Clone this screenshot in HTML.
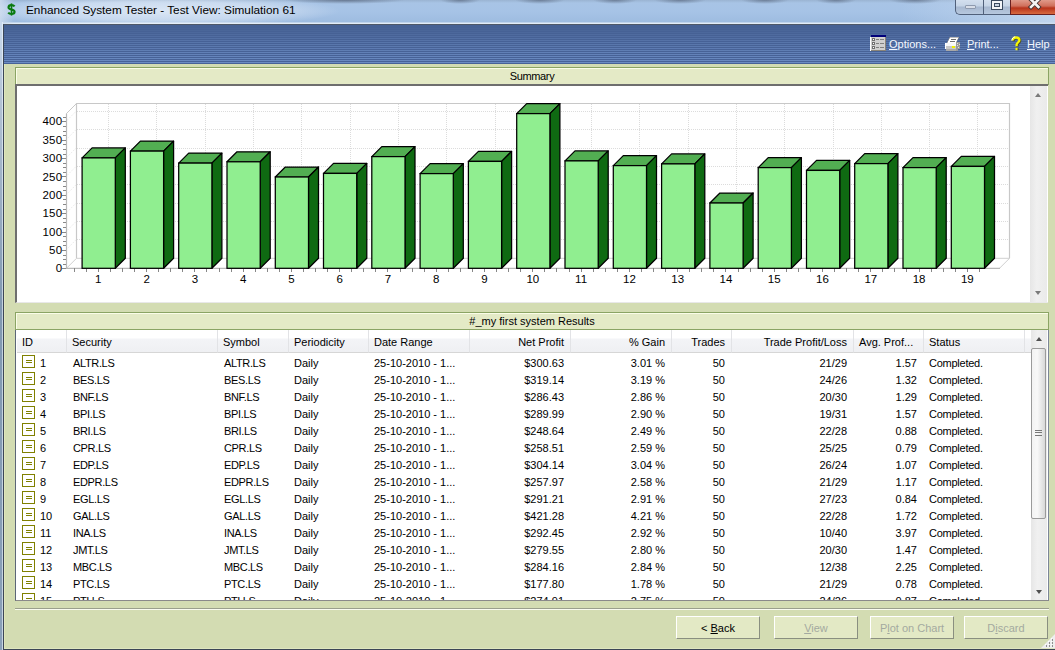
<!DOCTYPE html>
<html><head><meta charset="utf-8">
<style>
*{margin:0;padding:0;box-sizing:border-box}
html,body{width:1055px;height:650px;overflow:hidden;background:#d3dcb2;font-family:"Liberation Sans", sans-serif;font-size:11px;color:#000}
.a{position:absolute}
#title{left:0;top:0;width:1055px;height:24px;background:radial-gradient(ellipse 60px 4px at 345px 0px,rgba(60,70,90,.55),rgba(60,70,90,0)),radial-gradient(ellipse 20px 4px at 460px 0px,rgba(60,70,90,.5),rgba(60,70,90,0)),radial-gradient(ellipse 25px 4px at 540px 0px,rgba(60,70,90,.5),rgba(60,70,90,0)),radial-gradient(ellipse 22px 4px at 615px 0px,rgba(60,70,90,.5),rgba(60,70,90,0)),radial-gradient(ellipse 26px 4px at 680px 0px,rgba(60,70,90,.5),rgba(60,70,90,0)),radial-gradient(ellipse 24px 4px at 765px 0px,rgba(60,70,90,.5),rgba(60,70,90,0)),radial-gradient(ellipse 20px 4px at 836px 0px,rgba(60,70,90,.5),rgba(60,70,90,0)),radial-gradient(ellipse 26px 4px at 915px 0px,rgba(60,70,90,.5),rgba(60,70,90,0)),linear-gradient(90deg,rgba(200,218,240,0) 900px,rgba(200,218,240,.8) 1055px),radial-gradient(ellipse 180px 16px at 160px 11px,rgba(236,242,250,.75),rgba(236,242,250,.5) 60%,rgba(236,242,250,0)),linear-gradient(90deg,rgba(200,216,236,1) 0px,rgba(200,216,236,0) 14px),linear-gradient(180deg,#9ab4d2 0px,#a8c4e6 3px,#a6c3e6 12px,#9ebce0 22px,#e2ecf7 23px,#e2ecf7 24px)}
#tleft{left:0;top:22px;width:3px;height:628px;background:linear-gradient(90deg,rgba(0,0,0,0) 2px,rgba(240,248,255,.6) 2px),linear-gradient(180deg,#c8d8ec 0px,#b2c2d4 80px,#8098b0 280px,#8aa0b8 628px)}
#frame{left:3px;top:24px;width:1052px;height:626px;border-left:1px solid #3c4656;border-top:1px solid #4e5868;border-bottom:1px solid #3c4656;box-shadow:inset 0 -1px 0 #dfe6bf,inset 1px 0 0 #dfe6bb;background:#d3dcb2}
#tb{left:4px;top:25px;width:1051px;height:39px;background:linear-gradient(180deg,rgb(70,97,148) 0px,rgb(70,97,148) 1px,rgb(70,97,148) 1px,rgb(70,97,148) 2px,rgb(70,97,148) 2px,rgb(70,97,148) 3px,rgb(72,99,150) 3px,rgb(72,99,150) 4px,rgb(70,97,148) 4px,rgb(70,97,148) 5px,rgb(74,102,153) 5px,rgb(74,102,153) 6px,rgb(70,97,149) 6px,rgb(70,97,149) 7px,rgb(76,104,156) 7px,rgb(76,104,156) 8px,rgb(70,97,149) 8px,rgb(70,97,149) 9px,rgb(79,107,159) 9px,rgb(79,107,159) 10px,rgb(70,97,149) 10px,rgb(70,97,149) 11px,rgb(81,109,162) 11px,rgb(81,109,162) 12px,rgb(70,97,149) 12px,rgb(70,97,149) 13px,rgb(83,112,165) 13px,rgb(83,112,165) 14px,rgb(70,97,149) 14px,rgb(70,97,149) 15px,rgb(85,114,167) 15px,rgb(85,114,167) 16px,rgb(70,97,150) 16px,rgb(70,97,150) 17px,rgb(87,117,170) 17px,rgb(87,117,170) 18px,rgb(70,97,150) 18px,rgb(70,97,150) 19px,rgb(89,119,172) 19px,rgb(89,119,172) 20px,rgb(71,98,150) 20px,rgb(71,98,150) 21px,rgb(91,121,175) 21px,rgb(91,121,175) 22px,rgb(71,98,150) 22px,rgb(71,98,150) 23px,rgb(93,123,178) 23px,rgb(93,123,178) 24px,rgb(71,98,151) 24px,rgb(71,98,151) 25px,rgb(95,126,180) 25px,rgb(95,126,180) 26px,rgb(71,98,151) 26px,rgb(71,98,151) 27px,rgb(97,128,183) 27px,rgb(97,128,183) 28px,rgb(71,98,151) 28px,rgb(71,98,151) 29px,rgb(99,130,185) 29px,rgb(99,130,185) 30px,rgb(71,98,151) 30px,rgb(71,98,151) 31px,rgb(101,132,188) 31px,rgb(101,132,188) 32px,rgb(71,98,151) 32px,rgb(71,98,151) 33px,rgb(103,135,190) 33px,rgb(103,135,190) 34px,rgb(71,98,152) 34px,rgb(71,98,152) 35px,rgb(105,137,192) 35px,rgb(105,137,192) 36px,rgb(71,98,152) 36px,rgb(71,98,152) 37px,rgb(107,139,195) 37px,rgb(107,139,195) 38px,rgb(71,98,152) 38px,rgb(71,98,152) 39px)}
.hdr{position:absolute;left:15px;width:1034px;height:18px;background:#e4eac6;border:1px solid #8ba464;border-bottom:1px solid #8ba464;box-shadow:inset 1px 1px 0 #fbfde8}
.hdr span{position:absolute;top:2px;left:0;width:100%;text-align:center;color:#000}
#cpanel{left:15px;top:84px;width:1033px;height:219px;background:#fff;border-top:2px solid #6e6e6e;border-left:2px solid #6e6e6e;border-bottom:1px solid #e8e8e8}
.sb{position:absolute;width:17px;background:linear-gradient(90deg,#e6e6e6,#f0f0f0 40%,#eaeaea)}
.arr{position:absolute;width:0;height:0;border-left:3.5px solid transparent;border-right:3.5px solid transparent}
#tpanel{left:15px;top:330px;width:1034px;height:271px;background:#fff;border-left:1px solid #5c6677;border-right:1px solid #7c8698;border-bottom:1px solid #8a8a8a;overflow:hidden}
.th{position:absolute;top:330px;height:23px;background:linear-gradient(180deg,#ffffff 0px,#ffffff 8px,#f3f4f7 9px,#eff0f3 21px);border-right:1px solid #e2e3e6;border-bottom:1px solid #d6d6d6}
.th span{position:absolute;top:6px;white-space:nowrap}
.td{position:absolute;height:17px;line-height:17px;white-space:nowrap}
.td.r{text-align:right}
.ic{position:absolute;left:22px;width:13px;height:13px;border:1.3px solid #808000;background:#fff}
.ic i{position:absolute;left:2.7px;top:3.7px;width:6px;height:3px;border-top:1px solid #808000;border-bottom:1px solid #808000}
.btn{position:absolute;top:616px;width:84px;height:23px;background:#e3e9c5;border:1px solid;border-color:#ffffff #8a8f80 #8a8f80 #ffffff;text-align:center;line-height:22px;color:#a3a9a0}
.tbi{position:absolute;top:38px;color:#f4f7ff;white-space:nowrap}
</style></head><body>
<div class="a" id="title"></div>
<svg class="a" style="left:0;top:0" width="20" height="20" viewBox="0 0 20 20"><path d="M11.5,3.4 V15.6" stroke="#0a7a10" stroke-width="1.6"/><path d="M14.6,6.4 C13.9,5.5 12.9,5.1 11.5,5.1 C9.6,5.1 8.5,6 8.5,7.4 C8.5,10.1 14.6,8.9 14.6,11.8 C14.6,13.2 13.4,14 11.5,14 C10,14 8.9,13.5 8.2,12.6" fill="none" stroke="#0a7a10" stroke-width="2.1"/></svg>
<div class="a" style="left:26px;top:3px;font-size:11.8px;color:#000;white-space:nowrap">Enhanced System Tester - Test View: Simulation 61</div>
<!-- window buttons -->
<div class="a" style="left:955px;top:0;width:28px;height:15px;border:1px solid #50607a;border-top:none;border-right:none;border-radius:0 0 0 5px;background:linear-gradient(180deg,#d3dfee 0,#c5d4e6 6px,#a7b8d0 7px,#b7c8de 14px)"></div>
<div class="a" style="left:965px;top:5px;width:11px;height:4px;background:#d8dee8;border:1px solid #8e9aae;border-radius:1px"></div>
<div class="a" style="left:983px;top:0;width:27px;height:15px;border-left:1px solid #50607a;border-bottom:1px solid #50607a;background:linear-gradient(180deg,#d3dfee 0,#c5d4e6 6px,#a7b8d0 7px,#b7c8de 14px)"></div>
<div class="a" style="left:991px;top:0px;width:12px;height:10px;border:1px solid #3a4a60;background:#f2f4f8"><div class="a" style="left:2px;top:2px;width:6px;height:4px;border:1px solid #3a4a60;background:#c8d4e4"></div></div>
<div class="a" style="left:1010px;top:0;width:45px;height:15px;border-left:1px solid #6a2020;border-bottom:1px solid #6a2020;background:linear-gradient(180deg,#e09a8a 0,#d0705c 6px,#b8341c 8px,#d86a40 14px)"></div>
<svg class="a" style="left:1027px;top:0px" width="16" height="12" viewBox="0 0 16 12"><path d="M4,-0.5 L11.5,7 M11.5,-0.5 L4,7" stroke="#40302e" stroke-width="4.4" stroke-linecap="square"/><path d="M4,-0.5 L11.5,7 M11.5,-0.5 L4,7" stroke="#f4f4f4" stroke-width="2.6" stroke-linecap="square"/></svg>
<div class="a" id="tleft"></div>
<div class="a" id="frame"></div>
<div class="a" id="tb"></div>
<!-- toolbar items -->
<svg class="a" style="left:870px;top:35px" width="17" height="16" viewBox="0 0 17 16" shape-rendering="crispEdges">
<rect x="1" y="0" width="15" height="2" fill="#00007a"/>
<rect x="0" y="2" width="1" height="14" fill="#ffffff"/>
<rect x="1" y="2" width="15" height="14" fill="#d0d0d0"/>
<rect x="15" y="2" width="1" height="14" fill="#8a8478"/>
<rect x="1" y="15" width="15" height="1" fill="#8a8478"/>
<rect x="2" y="3" width="3" height="3" fill="#707070"/><rect x="3" y="4" width="1" height="1" fill="#fff"/>
<rect x="2" y="7" width="3" height="3" fill="#707070"/><rect x="3" y="8" width="1" height="1" fill="#fff"/>
<rect x="2" y="11" width="3" height="3" fill="#707070"/><rect x="3" y="12" width="1" height="1" fill="#fff"/>
<rect x="6" y="4" width="3" height="1" fill="#808080"/><rect x="10" y="4" width="4" height="1" fill="#808080"/>
<rect x="6" y="8" width="3" height="1" fill="#808080"/><rect x="10" y="8" width="4" height="1" fill="#808080"/>
<rect x="6" y="12" width="3" height="1" fill="#808080"/><rect x="10" y="12" width="4" height="1" fill="#808080"/>
</svg>
<div class="tbi" style="left:889px"><u>O</u>ptions...</div>
<svg class="a" style="left:944px;top:36px" width="18" height="16" viewBox="0 0 18 16" shape-rendering="crispEdges">
<path d="M6,1 H15 L12,7 H3 Z" fill="#ffffff" stroke="#8a8a8a" stroke-width="0.6"/>
<rect x="7" y="3" width="5" height="1" fill="#707070"/><rect x="6" y="5" width="5" height="1" fill="#707070"/>
<rect x="1" y="7" width="14" height="3" fill="#f8f8f8"/>
<rect x="1" y="10" width="14" height="3" fill="#c8c8c8"/>
<rect x="1" y="7" width="1" height="6" fill="#ffffff"/>
<rect x="8" y="10" width="3" height="2" fill="#f0f000"/>
<rect x="2" y="13" width="12" height="2" fill="#a8a8a8"/>
<path d="M12,6 h4 v7 h-2 v2 h-2 Z" fill="#9a9a9a"/>
<rect x="13" y="7" width="1" height="1" fill="#e0e0e0"/><rect x="15" y="8" width="1" height="1" fill="#e0e0e0"/><rect x="13" y="9" width="1" height="1" fill="#e0e0e0"/><rect x="14" y="11" width="1" height="1" fill="#e0e0e0"/>
</svg>
<div class="tbi" style="left:967px"><u>P</u>rint...</div>
<svg class="a" style="left:1010px;top:36px" width="12" height="15" viewBox="0 0 12 15">
<path d="M2.6,4.6 C2.6,2.2 4,1.5 6,1.5 C8.2,1.5 9.4,2.6 9.4,4.2 C9.4,6.2 6.6,6.8 6.6,8.8 V10.2" fill="none" stroke="#4a4a20" stroke-width="2.3" transform="translate(0.8,0.6)"/>
<path d="M2.6,4.6 C2.6,2.2 4,1.5 6,1.5 C8.2,1.5 9.4,2.6 9.4,4.2 C9.4,6.2 6.6,6.8 6.6,8.8 V10.2" fill="none" stroke="#f8f800" stroke-width="2.3"/>
<path d="M1.9,4.6 C1.9,2.4 3.2,1 5.2,0.8" fill="none" stroke="#ffffff" stroke-width="1"/>
<rect x="5.5" y="11.8" width="2.2" height="2.4" fill="#f8f800"/>
<rect x="7.7" y="12.2" width="0.9" height="2.2" fill="#4a4a20"/>
</svg>
<div class="tbi" style="left:1027px"><u>H</u>elp</div>

<!-- summary -->
<div class="hdr" style="top:67px"><span style="letter-spacing:-0.35px">Summary</span></div>
<div class="a" id="cpanel"></div>
<div class="sb" style="left:1030px;top:86px;height:216px"></div>
<div class="arr" style="left:1035px;top:93px;border-bottom:4px solid #7a7a7a"></div>
<div class="arr" style="left:1035px;top:291px;border-top:4px solid #7a7a7a"></div>
<svg width="1013" height="216" viewBox="17 86 1013 216" style="position:absolute;left:17px;top:86px">
<line x1="77" y1="239.5" x2="1009" y2="239.5" stroke="#dcdcdc" stroke-width="1" stroke-dasharray="1,1" shape-rendering="crispEdges"/>
<line x1="66" y1="249.9" x2="76" y2="239.9" stroke="#e4e4e4" stroke-width="1" stroke-dasharray="1,1.5"/>
<line x1="77" y1="221.5" x2="1009" y2="221.5" stroke="#dcdcdc" stroke-width="1" stroke-dasharray="1,1" shape-rendering="crispEdges"/>
<line x1="66" y1="231.6" x2="76" y2="221.6" stroke="#e4e4e4" stroke-width="1" stroke-dasharray="1,1.5"/>
<line x1="77" y1="203.5" x2="1009" y2="203.5" stroke="#dcdcdc" stroke-width="1" stroke-dasharray="1,1" shape-rendering="crispEdges"/>
<line x1="66" y1="213.2" x2="76" y2="203.2" stroke="#e4e4e4" stroke-width="1" stroke-dasharray="1,1.5"/>
<line x1="77" y1="184.5" x2="1009" y2="184.5" stroke="#dcdcdc" stroke-width="1" stroke-dasharray="1,1" shape-rendering="crispEdges"/>
<line x1="66" y1="194.9" x2="76" y2="184.9" stroke="#e4e4e4" stroke-width="1" stroke-dasharray="1,1.5"/>
<line x1="77" y1="166.5" x2="1009" y2="166.5" stroke="#dcdcdc" stroke-width="1" stroke-dasharray="1,1" shape-rendering="crispEdges"/>
<line x1="66" y1="176.5" x2="76" y2="166.5" stroke="#e4e4e4" stroke-width="1" stroke-dasharray="1,1.5"/>
<line x1="77" y1="148.5" x2="1009" y2="148.5" stroke="#dcdcdc" stroke-width="1" stroke-dasharray="1,1" shape-rendering="crispEdges"/>
<line x1="66" y1="158.1" x2="76" y2="148.1" stroke="#e4e4e4" stroke-width="1" stroke-dasharray="1,1.5"/>
<line x1="77" y1="129.5" x2="1009" y2="129.5" stroke="#dcdcdc" stroke-width="1" stroke-dasharray="1,1" shape-rendering="crispEdges"/>
<line x1="66" y1="139.8" x2="76" y2="129.8" stroke="#e4e4e4" stroke-width="1" stroke-dasharray="1,1.5"/>
<line x1="77" y1="111.5" x2="1009" y2="111.5" stroke="#dcdcdc" stroke-width="1" stroke-dasharray="1,1" shape-rendering="crispEdges"/>
<line x1="66" y1="121.4" x2="76" y2="111.4" stroke="#e4e4e4" stroke-width="1" stroke-dasharray="1,1.5"/>
<line x1="108.5" y1="104" x2="108.5" y2="258.3" stroke="#dcdcdc" stroke-width="1" stroke-dasharray="1,1" shape-rendering="crispEdges"/>
<line x1="156.5" y1="104" x2="156.5" y2="258.3" stroke="#dcdcdc" stroke-width="1" stroke-dasharray="1,1" shape-rendering="crispEdges"/>
<line x1="205.5" y1="104" x2="205.5" y2="258.3" stroke="#dcdcdc" stroke-width="1" stroke-dasharray="1,1" shape-rendering="crispEdges"/>
<line x1="253.5" y1="104" x2="253.5" y2="258.3" stroke="#dcdcdc" stroke-width="1" stroke-dasharray="1,1" shape-rendering="crispEdges"/>
<line x1="301.5" y1="104" x2="301.5" y2="258.3" stroke="#dcdcdc" stroke-width="1" stroke-dasharray="1,1" shape-rendering="crispEdges"/>
<line x1="350.5" y1="104" x2="350.5" y2="258.3" stroke="#dcdcdc" stroke-width="1" stroke-dasharray="1,1" shape-rendering="crispEdges"/>
<line x1="398.5" y1="104" x2="398.5" y2="258.3" stroke="#dcdcdc" stroke-width="1" stroke-dasharray="1,1" shape-rendering="crispEdges"/>
<line x1="446.5" y1="104" x2="446.5" y2="258.3" stroke="#dcdcdc" stroke-width="1" stroke-dasharray="1,1" shape-rendering="crispEdges"/>
<line x1="495.5" y1="104" x2="495.5" y2="258.3" stroke="#dcdcdc" stroke-width="1" stroke-dasharray="1,1" shape-rendering="crispEdges"/>
<line x1="543.5" y1="104" x2="543.5" y2="258.3" stroke="#dcdcdc" stroke-width="1" stroke-dasharray="1,1" shape-rendering="crispEdges"/>
<line x1="591.5" y1="104" x2="591.5" y2="258.3" stroke="#dcdcdc" stroke-width="1" stroke-dasharray="1,1" shape-rendering="crispEdges"/>
<line x1="639.5" y1="104" x2="639.5" y2="258.3" stroke="#dcdcdc" stroke-width="1" stroke-dasharray="1,1" shape-rendering="crispEdges"/>
<line x1="688.5" y1="104" x2="688.5" y2="258.3" stroke="#dcdcdc" stroke-width="1" stroke-dasharray="1,1" shape-rendering="crispEdges"/>
<line x1="736.5" y1="104" x2="736.5" y2="258.3" stroke="#dcdcdc" stroke-width="1" stroke-dasharray="1,1" shape-rendering="crispEdges"/>
<line x1="784.5" y1="104" x2="784.5" y2="258.3" stroke="#dcdcdc" stroke-width="1" stroke-dasharray="1,1" shape-rendering="crispEdges"/>
<line x1="833.5" y1="104" x2="833.5" y2="258.3" stroke="#dcdcdc" stroke-width="1" stroke-dasharray="1,1" shape-rendering="crispEdges"/>
<line x1="881.5" y1="104" x2="881.5" y2="258.3" stroke="#dcdcdc" stroke-width="1" stroke-dasharray="1,1" shape-rendering="crispEdges"/>
<line x1="929.5" y1="104" x2="929.5" y2="258.3" stroke="#dcdcdc" stroke-width="1" stroke-dasharray="1,1" shape-rendering="crispEdges"/>
<line x1="977.5" y1="104" x2="977.5" y2="258.3" stroke="#dcdcdc" stroke-width="1" stroke-dasharray="1,1" shape-rendering="crispEdges"/>
<path d="M76.5,258.3 V103.5 H1009.5 V258.3" fill="none" stroke="#c8c8c8" stroke-width="1.2"/>
<path d="M66.5,113.5 L76.5,103.5" fill="none" stroke="#c8c8c8" stroke-width="1"/>
<path d="M66.5,268.3 L76.5,258.3 H1009.5 L999.5,268.3" fill="none" stroke="#d0d0d0" stroke-width="1"/>
<path d="M66.5,113.5 V268.3 H1000" fill="none" stroke="#b8b8b8" stroke-width="1.2"/>
<line x1="62" y1="268.5" x2="66" y2="268.5" stroke="#888" stroke-width="1"/>
<line x1="63" y1="264.5" x2="66" y2="264.5" stroke="#888" stroke-width="1"/>
<line x1="63" y1="259.5" x2="66" y2="259.5" stroke="#888" stroke-width="1"/>
<line x1="63" y1="255.5" x2="66" y2="255.5" stroke="#888" stroke-width="1"/>
<line x1="62" y1="250.5" x2="66" y2="250.5" stroke="#888" stroke-width="1"/>
<line x1="63" y1="245.5" x2="66" y2="245.5" stroke="#888" stroke-width="1"/>
<line x1="63" y1="241.5" x2="66" y2="241.5" stroke="#888" stroke-width="1"/>
<line x1="63" y1="236.5" x2="66" y2="236.5" stroke="#888" stroke-width="1"/>
<line x1="62" y1="232.5" x2="66" y2="232.5" stroke="#888" stroke-width="1"/>
<line x1="63" y1="227.5" x2="66" y2="227.5" stroke="#888" stroke-width="1"/>
<line x1="63" y1="222.5" x2="66" y2="222.5" stroke="#888" stroke-width="1"/>
<line x1="63" y1="218.5" x2="66" y2="218.5" stroke="#888" stroke-width="1"/>
<line x1="62" y1="213.5" x2="66" y2="213.5" stroke="#888" stroke-width="1"/>
<line x1="63" y1="209.5" x2="66" y2="209.5" stroke="#888" stroke-width="1"/>
<line x1="63" y1="204.5" x2="66" y2="204.5" stroke="#888" stroke-width="1"/>
<line x1="63" y1="199.5" x2="66" y2="199.5" stroke="#888" stroke-width="1"/>
<line x1="62" y1="195.5" x2="66" y2="195.5" stroke="#888" stroke-width="1"/>
<line x1="63" y1="190.5" x2="66" y2="190.5" stroke="#888" stroke-width="1"/>
<line x1="63" y1="186.5" x2="66" y2="186.5" stroke="#888" stroke-width="1"/>
<line x1="63" y1="181.5" x2="66" y2="181.5" stroke="#888" stroke-width="1"/>
<line x1="62" y1="176.5" x2="66" y2="176.5" stroke="#888" stroke-width="1"/>
<line x1="63" y1="172.5" x2="66" y2="172.5" stroke="#888" stroke-width="1"/>
<line x1="63" y1="167.5" x2="66" y2="167.5" stroke="#888" stroke-width="1"/>
<line x1="63" y1="163.5" x2="66" y2="163.5" stroke="#888" stroke-width="1"/>
<line x1="62" y1="158.5" x2="66" y2="158.5" stroke="#888" stroke-width="1"/>
<line x1="63" y1="154.5" x2="66" y2="154.5" stroke="#888" stroke-width="1"/>
<line x1="63" y1="149.5" x2="66" y2="149.5" stroke="#888" stroke-width="1"/>
<line x1="63" y1="144.5" x2="66" y2="144.5" stroke="#888" stroke-width="1"/>
<line x1="62" y1="140.5" x2="66" y2="140.5" stroke="#888" stroke-width="1"/>
<line x1="63" y1="135.5" x2="66" y2="135.5" stroke="#888" stroke-width="1"/>
<line x1="63" y1="131.5" x2="66" y2="131.5" stroke="#888" stroke-width="1"/>
<line x1="63" y1="126.5" x2="66" y2="126.5" stroke="#888" stroke-width="1"/>
<line x1="62" y1="121.5" x2="66" y2="121.5" stroke="#888" stroke-width="1"/>
<line x1="63" y1="117.5" x2="66" y2="117.5" stroke="#888" stroke-width="1"/>
<text x="62.5" y="272.3" text-anchor="end" font-family='"Liberation Sans", sans-serif' font-size="11.5" letter-spacing="0.3" fill="#000">0</text>
<text x="62.5" y="253.9" text-anchor="end" font-family='"Liberation Sans", sans-serif' font-size="11.5" letter-spacing="0.3" fill="#000">50</text>
<text x="62.5" y="235.6" text-anchor="end" font-family='"Liberation Sans", sans-serif' font-size="11.5" letter-spacing="0.3" fill="#000">100</text>
<text x="62.5" y="217.2" text-anchor="end" font-family='"Liberation Sans", sans-serif' font-size="11.5" letter-spacing="0.3" fill="#000">150</text>
<text x="62.5" y="198.9" text-anchor="end" font-family='"Liberation Sans", sans-serif' font-size="11.5" letter-spacing="0.3" fill="#000">200</text>
<text x="62.5" y="180.5" text-anchor="end" font-family='"Liberation Sans", sans-serif' font-size="11.5" letter-spacing="0.3" fill="#000">250</text>
<text x="62.5" y="162.1" text-anchor="end" font-family='"Liberation Sans", sans-serif' font-size="11.5" letter-spacing="0.3" fill="#000">300</text>
<text x="62.5" y="143.8" text-anchor="end" font-family='"Liberation Sans", sans-serif' font-size="11.5" letter-spacing="0.3" fill="#000">350</text>
<text x="62.5" y="125.4" text-anchor="end" font-family='"Liberation Sans", sans-serif' font-size="11.5" letter-spacing="0.3" fill="#000">400</text>
<line x1="74.5" y1="268" x2="74.5" y2="272" stroke="#888" stroke-width="1" shape-rendering="crispEdges"/>
<line x1="86.5" y1="268" x2="86.5" y2="272" stroke="#888" stroke-width="1" shape-rendering="crispEdges"/>
<line x1="98.5" y1="268" x2="98.5" y2="272" stroke="#888" stroke-width="1" shape-rendering="crispEdges"/>
<line x1="110.5" y1="268" x2="110.5" y2="272" stroke="#888" stroke-width="1" shape-rendering="crispEdges"/>
<text x="98.3" y="283" text-anchor="middle" font-family='"Liberation Sans", sans-serif' font-size="11.5" fill="#000">1</text>
<line x1="122.5" y1="268" x2="122.5" y2="272" stroke="#888" stroke-width="1" shape-rendering="crispEdges"/>
<line x1="134.5" y1="268" x2="134.5" y2="272" stroke="#888" stroke-width="1" shape-rendering="crispEdges"/>
<line x1="146.5" y1="268" x2="146.5" y2="272" stroke="#888" stroke-width="1" shape-rendering="crispEdges"/>
<line x1="158.5" y1="268" x2="158.5" y2="272" stroke="#888" stroke-width="1" shape-rendering="crispEdges"/>
<text x="146.6" y="283" text-anchor="middle" font-family='"Liberation Sans", sans-serif' font-size="11.5" fill="#000">2</text>
<line x1="170.5" y1="268" x2="170.5" y2="272" stroke="#888" stroke-width="1" shape-rendering="crispEdges"/>
<line x1="182.5" y1="268" x2="182.5" y2="272" stroke="#888" stroke-width="1" shape-rendering="crispEdges"/>
<line x1="194.5" y1="268" x2="194.5" y2="272" stroke="#888" stroke-width="1" shape-rendering="crispEdges"/>
<line x1="206.5" y1="268" x2="206.5" y2="272" stroke="#888" stroke-width="1" shape-rendering="crispEdges"/>
<text x="194.9" y="283" text-anchor="middle" font-family='"Liberation Sans", sans-serif' font-size="11.5" fill="#000">3</text>
<line x1="219.5" y1="268" x2="219.5" y2="272" stroke="#888" stroke-width="1" shape-rendering="crispEdges"/>
<line x1="231.5" y1="268" x2="231.5" y2="272" stroke="#888" stroke-width="1" shape-rendering="crispEdges"/>
<line x1="243.5" y1="268" x2="243.5" y2="272" stroke="#888" stroke-width="1" shape-rendering="crispEdges"/>
<line x1="255.5" y1="268" x2="255.5" y2="272" stroke="#888" stroke-width="1" shape-rendering="crispEdges"/>
<text x="243.1" y="283" text-anchor="middle" font-family='"Liberation Sans", sans-serif' font-size="11.5" fill="#000">4</text>
<line x1="267.5" y1="268" x2="267.5" y2="272" stroke="#888" stroke-width="1" shape-rendering="crispEdges"/>
<line x1="279.5" y1="268" x2="279.5" y2="272" stroke="#888" stroke-width="1" shape-rendering="crispEdges"/>
<line x1="291.5" y1="268" x2="291.5" y2="272" stroke="#888" stroke-width="1" shape-rendering="crispEdges"/>
<line x1="303.5" y1="268" x2="303.5" y2="272" stroke="#888" stroke-width="1" shape-rendering="crispEdges"/>
<text x="291.4" y="283" text-anchor="middle" font-family='"Liberation Sans", sans-serif' font-size="11.5" fill="#000">5</text>
<line x1="315.5" y1="268" x2="315.5" y2="272" stroke="#888" stroke-width="1" shape-rendering="crispEdges"/>
<line x1="327.5" y1="268" x2="327.5" y2="272" stroke="#888" stroke-width="1" shape-rendering="crispEdges"/>
<line x1="339.5" y1="268" x2="339.5" y2="272" stroke="#888" stroke-width="1" shape-rendering="crispEdges"/>
<line x1="351.5" y1="268" x2="351.5" y2="272" stroke="#888" stroke-width="1" shape-rendering="crispEdges"/>
<text x="339.7" y="283" text-anchor="middle" font-family='"Liberation Sans", sans-serif' font-size="11.5" fill="#000">6</text>
<line x1="363.5" y1="268" x2="363.5" y2="272" stroke="#888" stroke-width="1" shape-rendering="crispEdges"/>
<line x1="375.5" y1="268" x2="375.5" y2="272" stroke="#888" stroke-width="1" shape-rendering="crispEdges"/>
<line x1="387.5" y1="268" x2="387.5" y2="272" stroke="#888" stroke-width="1" shape-rendering="crispEdges"/>
<line x1="400.5" y1="268" x2="400.5" y2="272" stroke="#888" stroke-width="1" shape-rendering="crispEdges"/>
<text x="388.0" y="283" text-anchor="middle" font-family='"Liberation Sans", sans-serif' font-size="11.5" fill="#000">7</text>
<line x1="412.5" y1="268" x2="412.5" y2="272" stroke="#888" stroke-width="1" shape-rendering="crispEdges"/>
<line x1="424.5" y1="268" x2="424.5" y2="272" stroke="#888" stroke-width="1" shape-rendering="crispEdges"/>
<line x1="436.5" y1="268" x2="436.5" y2="272" stroke="#888" stroke-width="1" shape-rendering="crispEdges"/>
<line x1="448.5" y1="268" x2="448.5" y2="272" stroke="#888" stroke-width="1" shape-rendering="crispEdges"/>
<text x="436.3" y="283" text-anchor="middle" font-family='"Liberation Sans", sans-serif' font-size="11.5" fill="#000">8</text>
<line x1="460.5" y1="268" x2="460.5" y2="272" stroke="#888" stroke-width="1" shape-rendering="crispEdges"/>
<line x1="472.5" y1="268" x2="472.5" y2="272" stroke="#888" stroke-width="1" shape-rendering="crispEdges"/>
<line x1="484.5" y1="268" x2="484.5" y2="272" stroke="#888" stroke-width="1" shape-rendering="crispEdges"/>
<line x1="496.5" y1="268" x2="496.5" y2="272" stroke="#888" stroke-width="1" shape-rendering="crispEdges"/>
<text x="484.5" y="283" text-anchor="middle" font-family='"Liberation Sans", sans-serif' font-size="11.5" fill="#000">9</text>
<line x1="508.5" y1="268" x2="508.5" y2="272" stroke="#888" stroke-width="1" shape-rendering="crispEdges"/>
<line x1="520.5" y1="268" x2="520.5" y2="272" stroke="#888" stroke-width="1" shape-rendering="crispEdges"/>
<line x1="532.5" y1="268" x2="532.5" y2="272" stroke="#888" stroke-width="1" shape-rendering="crispEdges"/>
<line x1="544.5" y1="268" x2="544.5" y2="272" stroke="#888" stroke-width="1" shape-rendering="crispEdges"/>
<text x="532.8" y="283" text-anchor="middle" font-family='"Liberation Sans", sans-serif' font-size="11.5" fill="#000">10</text>
<line x1="556.5" y1="268" x2="556.5" y2="272" stroke="#888" stroke-width="1" shape-rendering="crispEdges"/>
<line x1="569.5" y1="268" x2="569.5" y2="272" stroke="#888" stroke-width="1" shape-rendering="crispEdges"/>
<line x1="581.5" y1="268" x2="581.5" y2="272" stroke="#888" stroke-width="1" shape-rendering="crispEdges"/>
<line x1="593.5" y1="268" x2="593.5" y2="272" stroke="#888" stroke-width="1" shape-rendering="crispEdges"/>
<text x="581.1" y="283" text-anchor="middle" font-family='"Liberation Sans", sans-serif' font-size="11.5" fill="#000">11</text>
<line x1="605.5" y1="268" x2="605.5" y2="272" stroke="#888" stroke-width="1" shape-rendering="crispEdges"/>
<line x1="617.5" y1="268" x2="617.5" y2="272" stroke="#888" stroke-width="1" shape-rendering="crispEdges"/>
<line x1="629.5" y1="268" x2="629.5" y2="272" stroke="#888" stroke-width="1" shape-rendering="crispEdges"/>
<line x1="641.5" y1="268" x2="641.5" y2="272" stroke="#888" stroke-width="1" shape-rendering="crispEdges"/>
<text x="629.4" y="283" text-anchor="middle" font-family='"Liberation Sans", sans-serif' font-size="11.5" fill="#000">12</text>
<line x1="653.5" y1="268" x2="653.5" y2="272" stroke="#888" stroke-width="1" shape-rendering="crispEdges"/>
<line x1="665.5" y1="268" x2="665.5" y2="272" stroke="#888" stroke-width="1" shape-rendering="crispEdges"/>
<line x1="677.5" y1="268" x2="677.5" y2="272" stroke="#888" stroke-width="1" shape-rendering="crispEdges"/>
<line x1="689.5" y1="268" x2="689.5" y2="272" stroke="#888" stroke-width="1" shape-rendering="crispEdges"/>
<text x="677.7" y="283" text-anchor="middle" font-family='"Liberation Sans", sans-serif' font-size="11.5" fill="#000">13</text>
<line x1="701.5" y1="268" x2="701.5" y2="272" stroke="#888" stroke-width="1" shape-rendering="crispEdges"/>
<line x1="713.5" y1="268" x2="713.5" y2="272" stroke="#888" stroke-width="1" shape-rendering="crispEdges"/>
<line x1="725.5" y1="268" x2="725.5" y2="272" stroke="#888" stroke-width="1" shape-rendering="crispEdges"/>
<line x1="738.5" y1="268" x2="738.5" y2="272" stroke="#888" stroke-width="1" shape-rendering="crispEdges"/>
<text x="725.9" y="283" text-anchor="middle" font-family='"Liberation Sans", sans-serif' font-size="11.5" fill="#000">14</text>
<line x1="750.5" y1="268" x2="750.5" y2="272" stroke="#888" stroke-width="1" shape-rendering="crispEdges"/>
<line x1="762.5" y1="268" x2="762.5" y2="272" stroke="#888" stroke-width="1" shape-rendering="crispEdges"/>
<line x1="774.5" y1="268" x2="774.5" y2="272" stroke="#888" stroke-width="1" shape-rendering="crispEdges"/>
<line x1="786.5" y1="268" x2="786.5" y2="272" stroke="#888" stroke-width="1" shape-rendering="crispEdges"/>
<text x="774.2" y="283" text-anchor="middle" font-family='"Liberation Sans", sans-serif' font-size="11.5" fill="#000">15</text>
<line x1="798.5" y1="268" x2="798.5" y2="272" stroke="#888" stroke-width="1" shape-rendering="crispEdges"/>
<line x1="810.5" y1="268" x2="810.5" y2="272" stroke="#888" stroke-width="1" shape-rendering="crispEdges"/>
<line x1="822.5" y1="268" x2="822.5" y2="272" stroke="#888" stroke-width="1" shape-rendering="crispEdges"/>
<line x1="834.5" y1="268" x2="834.5" y2="272" stroke="#888" stroke-width="1" shape-rendering="crispEdges"/>
<text x="822.5" y="283" text-anchor="middle" font-family='"Liberation Sans", sans-serif' font-size="11.5" fill="#000">16</text>
<line x1="846.5" y1="268" x2="846.5" y2="272" stroke="#888" stroke-width="1" shape-rendering="crispEdges"/>
<line x1="858.5" y1="268" x2="858.5" y2="272" stroke="#888" stroke-width="1" shape-rendering="crispEdges"/>
<line x1="870.5" y1="268" x2="870.5" y2="272" stroke="#888" stroke-width="1" shape-rendering="crispEdges"/>
<line x1="882.5" y1="268" x2="882.5" y2="272" stroke="#888" stroke-width="1" shape-rendering="crispEdges"/>
<text x="870.8" y="283" text-anchor="middle" font-family='"Liberation Sans", sans-serif' font-size="11.5" fill="#000">17</text>
<line x1="894.5" y1="268" x2="894.5" y2="272" stroke="#888" stroke-width="1" shape-rendering="crispEdges"/>
<line x1="906.5" y1="268" x2="906.5" y2="272" stroke="#888" stroke-width="1" shape-rendering="crispEdges"/>
<line x1="919.5" y1="268" x2="919.5" y2="272" stroke="#888" stroke-width="1" shape-rendering="crispEdges"/>
<line x1="931.5" y1="268" x2="931.5" y2="272" stroke="#888" stroke-width="1" shape-rendering="crispEdges"/>
<text x="919.1" y="283" text-anchor="middle" font-family='"Liberation Sans", sans-serif' font-size="11.5" fill="#000">18</text>
<line x1="943.5" y1="268" x2="943.5" y2="272" stroke="#888" stroke-width="1" shape-rendering="crispEdges"/>
<line x1="955.5" y1="268" x2="955.5" y2="272" stroke="#888" stroke-width="1" shape-rendering="crispEdges"/>
<line x1="967.5" y1="268" x2="967.5" y2="272" stroke="#888" stroke-width="1" shape-rendering="crispEdges"/>
<line x1="979.5" y1="268" x2="979.5" y2="272" stroke="#888" stroke-width="1" shape-rendering="crispEdges"/>
<text x="967.3" y="283" text-anchor="middle" font-family='"Liberation Sans", sans-serif' font-size="11.5" fill="#000">19</text>
<path d="M82.1,157.9 L92.1,147.9 H125.3 L115.3,157.9 Z" fill="#52ae52" stroke="#000" stroke-width="1.25" stroke-linejoin="round"/>
<path d="M115.3,157.9 L125.3,147.9 V258.3 L115.3,268.3 Z" fill="#0f6a12" stroke="#000" stroke-width="1.25" stroke-linejoin="round"/>
<rect x="82.1" y="157.9" width="33.2" height="110.4" fill="#90ee90" stroke="#000" stroke-width="1.25"/>
<path d="M130.4,151.1 L140.4,141.1 H173.6 L163.6,151.1 Z" fill="#52ae52" stroke="#000" stroke-width="1.25" stroke-linejoin="round"/>
<path d="M163.6,151.1 L173.6,141.1 V258.3 L163.6,268.3 Z" fill="#0f6a12" stroke="#000" stroke-width="1.25" stroke-linejoin="round"/>
<rect x="130.4" y="151.1" width="33.2" height="117.2" fill="#90ee90" stroke="#000" stroke-width="1.25"/>
<path d="M178.7,163.1 L188.7,153.1 H221.9 L211.9,163.1 Z" fill="#52ae52" stroke="#000" stroke-width="1.25" stroke-linejoin="round"/>
<path d="M211.9,163.1 L221.9,153.1 V258.3 L211.9,268.3 Z" fill="#0f6a12" stroke="#000" stroke-width="1.25" stroke-linejoin="round"/>
<rect x="178.7" y="163.1" width="33.2" height="105.2" fill="#90ee90" stroke="#000" stroke-width="1.25"/>
<path d="M227.0,161.8 L237.0,151.8 H270.2 L260.2,161.8 Z" fill="#52ae52" stroke="#000" stroke-width="1.25" stroke-linejoin="round"/>
<path d="M260.2,161.8 L270.2,151.8 V258.3 L260.2,268.3 Z" fill="#0f6a12" stroke="#000" stroke-width="1.25" stroke-linejoin="round"/>
<rect x="227.0" y="161.8" width="33.2" height="106.5" fill="#90ee90" stroke="#000" stroke-width="1.25"/>
<path d="M275.3,177.0 L285.3,167.0 H318.5 L308.5,177.0 Z" fill="#52ae52" stroke="#000" stroke-width="1.25" stroke-linejoin="round"/>
<path d="M308.5,177.0 L318.5,167.0 V258.3 L308.5,268.3 Z" fill="#0f6a12" stroke="#000" stroke-width="1.25" stroke-linejoin="round"/>
<rect x="275.3" y="177.0" width="33.2" height="91.3" fill="#90ee90" stroke="#000" stroke-width="1.25"/>
<path d="M323.5,173.4 L333.5,163.4 H366.8 L356.8,173.4 Z" fill="#52ae52" stroke="#000" stroke-width="1.25" stroke-linejoin="round"/>
<path d="M356.8,173.4 L366.8,163.4 V258.3 L356.8,268.3 Z" fill="#0f6a12" stroke="#000" stroke-width="1.25" stroke-linejoin="round"/>
<rect x="323.5" y="173.4" width="33.2" height="94.9" fill="#90ee90" stroke="#000" stroke-width="1.25"/>
<path d="M371.8,156.6 L381.8,146.6 H415.0 L405.0,156.6 Z" fill="#52ae52" stroke="#000" stroke-width="1.25" stroke-linejoin="round"/>
<path d="M405.0,156.6 L415.0,146.6 V258.3 L405.0,268.3 Z" fill="#0f6a12" stroke="#000" stroke-width="1.25" stroke-linejoin="round"/>
<rect x="371.8" y="156.6" width="33.2" height="111.7" fill="#90ee90" stroke="#000" stroke-width="1.25"/>
<path d="M420.1,173.6 L430.1,163.6 H463.3 L453.3,173.6 Z" fill="#52ae52" stroke="#000" stroke-width="1.25" stroke-linejoin="round"/>
<path d="M453.3,173.6 L463.3,163.6 V258.3 L453.3,268.3 Z" fill="#0f6a12" stroke="#000" stroke-width="1.25" stroke-linejoin="round"/>
<rect x="420.1" y="173.6" width="33.2" height="94.7" fill="#90ee90" stroke="#000" stroke-width="1.25"/>
<path d="M468.4,161.4 L478.4,151.4 H511.6 L501.6,161.4 Z" fill="#52ae52" stroke="#000" stroke-width="1.25" stroke-linejoin="round"/>
<path d="M501.6,161.4 L511.6,151.4 V258.3 L501.6,268.3 Z" fill="#0f6a12" stroke="#000" stroke-width="1.25" stroke-linejoin="round"/>
<rect x="468.4" y="161.4" width="33.2" height="106.9" fill="#90ee90" stroke="#000" stroke-width="1.25"/>
<path d="M516.7,113.6 L526.7,103.6 H559.9 L549.9,113.6 Z" fill="#52ae52" stroke="#000" stroke-width="1.25" stroke-linejoin="round"/>
<path d="M549.9,113.6 L559.9,103.6 V258.3 L549.9,268.3 Z" fill="#0f6a12" stroke="#000" stroke-width="1.25" stroke-linejoin="round"/>
<rect x="516.7" y="113.6" width="33.2" height="154.7" fill="#90ee90" stroke="#000" stroke-width="1.25"/>
<path d="M565.0,160.9 L575.0,150.9 H608.2 L598.2,160.9 Z" fill="#52ae52" stroke="#000" stroke-width="1.25" stroke-linejoin="round"/>
<path d="M598.2,160.9 L608.2,150.9 V258.3 L598.2,268.3 Z" fill="#0f6a12" stroke="#000" stroke-width="1.25" stroke-linejoin="round"/>
<rect x="565.0" y="160.9" width="33.2" height="107.4" fill="#90ee90" stroke="#000" stroke-width="1.25"/>
<path d="M613.3,165.6 L623.3,155.6 H656.5 L646.5,165.6 Z" fill="#52ae52" stroke="#000" stroke-width="1.25" stroke-linejoin="round"/>
<path d="M646.5,165.6 L656.5,155.6 V258.3 L646.5,268.3 Z" fill="#0f6a12" stroke="#000" stroke-width="1.25" stroke-linejoin="round"/>
<rect x="613.3" y="165.6" width="33.2" height="102.7" fill="#90ee90" stroke="#000" stroke-width="1.25"/>
<path d="M661.6,163.9 L671.6,153.9 H704.8 L694.8,163.9 Z" fill="#52ae52" stroke="#000" stroke-width="1.25" stroke-linejoin="round"/>
<path d="M694.8,163.9 L704.8,153.9 V258.3 L694.8,268.3 Z" fill="#0f6a12" stroke="#000" stroke-width="1.25" stroke-linejoin="round"/>
<rect x="661.6" y="163.9" width="33.2" height="104.4" fill="#90ee90" stroke="#000" stroke-width="1.25"/>
<path d="M709.9,203.0 L719.9,193.0 H753.1 L743.1,203.0 Z" fill="#52ae52" stroke="#000" stroke-width="1.25" stroke-linejoin="round"/>
<path d="M743.1,203.0 L753.1,193.0 V258.3 L743.1,268.3 Z" fill="#0f6a12" stroke="#000" stroke-width="1.25" stroke-linejoin="round"/>
<rect x="709.9" y="203.0" width="33.2" height="65.3" fill="#90ee90" stroke="#000" stroke-width="1.25"/>
<path d="M758.2,167.6 L768.2,157.6 H801.4 L791.4,167.6 Z" fill="#52ae52" stroke="#000" stroke-width="1.25" stroke-linejoin="round"/>
<path d="M791.4,167.6 L801.4,157.6 V258.3 L791.4,268.3 Z" fill="#0f6a12" stroke="#000" stroke-width="1.25" stroke-linejoin="round"/>
<rect x="758.2" y="167.6" width="33.2" height="100.7" fill="#90ee90" stroke="#000" stroke-width="1.25"/>
<path d="M806.5,170.4 L816.5,160.4 H849.7 L839.7,170.4 Z" fill="#52ae52" stroke="#000" stroke-width="1.25" stroke-linejoin="round"/>
<path d="M839.7,170.4 L849.7,160.4 V258.3 L839.7,268.3 Z" fill="#0f6a12" stroke="#000" stroke-width="1.25" stroke-linejoin="round"/>
<rect x="806.5" y="170.4" width="33.2" height="97.9" fill="#90ee90" stroke="#000" stroke-width="1.25"/>
<path d="M854.7,163.6 L864.7,153.6 H897.9 L887.9,163.6 Z" fill="#52ae52" stroke="#000" stroke-width="1.25" stroke-linejoin="round"/>
<path d="M887.9,163.6 L897.9,153.6 V258.3 L887.9,268.3 Z" fill="#0f6a12" stroke="#000" stroke-width="1.25" stroke-linejoin="round"/>
<rect x="854.7" y="163.6" width="33.2" height="104.7" fill="#90ee90" stroke="#000" stroke-width="1.25"/>
<path d="M903.0,167.6 L913.0,157.6 H946.2 L936.2,167.6 Z" fill="#52ae52" stroke="#000" stroke-width="1.25" stroke-linejoin="round"/>
<path d="M936.2,167.6 L946.2,157.6 V258.3 L936.2,268.3 Z" fill="#0f6a12" stroke="#000" stroke-width="1.25" stroke-linejoin="round"/>
<rect x="903.0" y="167.6" width="33.2" height="100.7" fill="#90ee90" stroke="#000" stroke-width="1.25"/>
<path d="M951.3,166.4 L961.3,156.4 H994.5 L984.5,166.4 Z" fill="#52ae52" stroke="#000" stroke-width="1.25" stroke-linejoin="round"/>
<path d="M984.5,166.4 L994.5,156.4 V258.3 L984.5,268.3 Z" fill="#0f6a12" stroke="#000" stroke-width="1.25" stroke-linejoin="round"/>
<rect x="951.3" y="166.4" width="33.2" height="101.9" fill="#90ee90" stroke="#000" stroke-width="1.25"/>
</svg>

<!-- results -->
<div class="hdr" style="top:312px;height:18px"><span>#_my first system Results</span></div>
<div class="a" id="tpanel"></div>
<div class="a" style="left:0;top:0;width:1030px;height:600px;overflow:hidden">
<div class="th" style="left:17px;width:50px"><span style="left:5px">ID</span></div>
<div class="th" style="left:67px;width:151px"><span style="left:5px">Security</span></div>
<div class="th" style="left:218px;width:71px"><span style="left:5px">Symbol</span></div>
<div class="th" style="left:289px;width:80px"><span style="left:5px">Periodicity</span></div>
<div class="th" style="left:369px;width:101px"><span style="left:5px">Date Range</span></div>
<div class="th" style="left:470px;width:101px"><span style="right:6px">Net Profit</span></div>
<div class="th" style="left:571px;width:101px"><span style="right:6px">% Gain</span></div>
<div class="th" style="left:672px;width:60px"><span style="right:6px">Trades</span></div>
<div class="th" style="left:732px;width:122px"><span style="right:6px">Trade Profit/Loss</span></div>
<div class="th" style="left:854px;width:70px"><span style="left:5px">Avg. Prof...</span></div>
<div class="th" style="left:924px;width:101px"><span style="left:5px">Status</span></div>
<div class="ic" style="top:355px"><i></i></div>
<div class="td" style="left:40px;top:355px">1</div>
<div class="td" style="left:73px;top:355px;letter-spacing:-0.35px">ALTR.LS</div>
<div class="td" style="left:224px;top:355px;letter-spacing:-0.35px">ALTR.LS</div>
<div class="td" style="left:294px;top:355px;letter-spacing:0">Daily</div>
<div class="td" style="left:374px;top:355px;letter-spacing:0">25-10-2010 - 1...</div>
<div class="td r" style="left:469px;width:95px;top:355px">$300.63</div>
<div class="td r" style="left:570px;width:95px;top:355px">3.01 %</div>
<div class="td r" style="left:671px;width:54px;top:355px">50</div>
<div class="td r" style="left:731px;width:116px;top:355px">21/29</div>
<div class="td r" style="left:853px;width:64px;top:355px">1.57</div>
<div class="td" style="left:929px;top:355px;letter-spacing:-0.25px">Completed.</div>
<div class="ic" style="top:372px"><i></i></div>
<div class="td" style="left:40px;top:372px">2</div>
<div class="td" style="left:73px;top:372px;letter-spacing:-0.35px">BES.LS</div>
<div class="td" style="left:224px;top:372px;letter-spacing:-0.35px">BES.LS</div>
<div class="td" style="left:294px;top:372px;letter-spacing:0">Daily</div>
<div class="td" style="left:374px;top:372px;letter-spacing:0">25-10-2010 - 1...</div>
<div class="td r" style="left:469px;width:95px;top:372px">$319.14</div>
<div class="td r" style="left:570px;width:95px;top:372px">3.19 %</div>
<div class="td r" style="left:671px;width:54px;top:372px">50</div>
<div class="td r" style="left:731px;width:116px;top:372px">24/26</div>
<div class="td r" style="left:853px;width:64px;top:372px">1.32</div>
<div class="td" style="left:929px;top:372px;letter-spacing:-0.25px">Completed.</div>
<div class="ic" style="top:389px"><i></i></div>
<div class="td" style="left:40px;top:389px">3</div>
<div class="td" style="left:73px;top:389px;letter-spacing:-0.35px">BNF.LS</div>
<div class="td" style="left:224px;top:389px;letter-spacing:-0.35px">BNF.LS</div>
<div class="td" style="left:294px;top:389px;letter-spacing:0">Daily</div>
<div class="td" style="left:374px;top:389px;letter-spacing:0">25-10-2010 - 1...</div>
<div class="td r" style="left:469px;width:95px;top:389px">$286.43</div>
<div class="td r" style="left:570px;width:95px;top:389px">2.86 %</div>
<div class="td r" style="left:671px;width:54px;top:389px">50</div>
<div class="td r" style="left:731px;width:116px;top:389px">20/30</div>
<div class="td r" style="left:853px;width:64px;top:389px">1.29</div>
<div class="td" style="left:929px;top:389px;letter-spacing:-0.25px">Completed.</div>
<div class="ic" style="top:406px"><i></i></div>
<div class="td" style="left:40px;top:406px">4</div>
<div class="td" style="left:73px;top:406px;letter-spacing:-0.35px">BPI.LS</div>
<div class="td" style="left:224px;top:406px;letter-spacing:-0.35px">BPI.LS</div>
<div class="td" style="left:294px;top:406px;letter-spacing:0">Daily</div>
<div class="td" style="left:374px;top:406px;letter-spacing:0">25-10-2010 - 1...</div>
<div class="td r" style="left:469px;width:95px;top:406px">$289.99</div>
<div class="td r" style="left:570px;width:95px;top:406px">2.90 %</div>
<div class="td r" style="left:671px;width:54px;top:406px">50</div>
<div class="td r" style="left:731px;width:116px;top:406px">19/31</div>
<div class="td r" style="left:853px;width:64px;top:406px">1.57</div>
<div class="td" style="left:929px;top:406px;letter-spacing:-0.25px">Completed.</div>
<div class="ic" style="top:423px"><i></i></div>
<div class="td" style="left:40px;top:423px">5</div>
<div class="td" style="left:73px;top:423px;letter-spacing:-0.35px">BRI.LS</div>
<div class="td" style="left:224px;top:423px;letter-spacing:-0.35px">BRI.LS</div>
<div class="td" style="left:294px;top:423px;letter-spacing:0">Daily</div>
<div class="td" style="left:374px;top:423px;letter-spacing:0">25-10-2010 - 1...</div>
<div class="td r" style="left:469px;width:95px;top:423px">$248.64</div>
<div class="td r" style="left:570px;width:95px;top:423px">2.49 %</div>
<div class="td r" style="left:671px;width:54px;top:423px">50</div>
<div class="td r" style="left:731px;width:116px;top:423px">22/28</div>
<div class="td r" style="left:853px;width:64px;top:423px">0.88</div>
<div class="td" style="left:929px;top:423px;letter-spacing:-0.25px">Completed.</div>
<div class="ic" style="top:440px"><i></i></div>
<div class="td" style="left:40px;top:440px">6</div>
<div class="td" style="left:73px;top:440px;letter-spacing:-0.35px">CPR.LS</div>
<div class="td" style="left:224px;top:440px;letter-spacing:-0.35px">CPR.LS</div>
<div class="td" style="left:294px;top:440px;letter-spacing:0">Daily</div>
<div class="td" style="left:374px;top:440px;letter-spacing:0">25-10-2010 - 1...</div>
<div class="td r" style="left:469px;width:95px;top:440px">$258.51</div>
<div class="td r" style="left:570px;width:95px;top:440px">2.59 %</div>
<div class="td r" style="left:671px;width:54px;top:440px">50</div>
<div class="td r" style="left:731px;width:116px;top:440px">25/25</div>
<div class="td r" style="left:853px;width:64px;top:440px">0.79</div>
<div class="td" style="left:929px;top:440px;letter-spacing:-0.25px">Completed.</div>
<div class="ic" style="top:457px"><i></i></div>
<div class="td" style="left:40px;top:457px">7</div>
<div class="td" style="left:73px;top:457px;letter-spacing:-0.35px">EDP.LS</div>
<div class="td" style="left:224px;top:457px;letter-spacing:-0.35px">EDP.LS</div>
<div class="td" style="left:294px;top:457px;letter-spacing:0">Daily</div>
<div class="td" style="left:374px;top:457px;letter-spacing:0">25-10-2010 - 1...</div>
<div class="td r" style="left:469px;width:95px;top:457px">$304.14</div>
<div class="td r" style="left:570px;width:95px;top:457px">3.04 %</div>
<div class="td r" style="left:671px;width:54px;top:457px">50</div>
<div class="td r" style="left:731px;width:116px;top:457px">26/24</div>
<div class="td r" style="left:853px;width:64px;top:457px">1.07</div>
<div class="td" style="left:929px;top:457px;letter-spacing:-0.25px">Completed.</div>
<div class="ic" style="top:474px"><i></i></div>
<div class="td" style="left:40px;top:474px">8</div>
<div class="td" style="left:73px;top:474px;letter-spacing:-0.35px">EDPR.LS</div>
<div class="td" style="left:224px;top:474px;letter-spacing:-0.35px">EDPR.LS</div>
<div class="td" style="left:294px;top:474px;letter-spacing:0">Daily</div>
<div class="td" style="left:374px;top:474px;letter-spacing:0">25-10-2010 - 1...</div>
<div class="td r" style="left:469px;width:95px;top:474px">$257.97</div>
<div class="td r" style="left:570px;width:95px;top:474px">2.58 %</div>
<div class="td r" style="left:671px;width:54px;top:474px">50</div>
<div class="td r" style="left:731px;width:116px;top:474px">21/29</div>
<div class="td r" style="left:853px;width:64px;top:474px">1.17</div>
<div class="td" style="left:929px;top:474px;letter-spacing:-0.25px">Completed.</div>
<div class="ic" style="top:491px"><i></i></div>
<div class="td" style="left:40px;top:491px">9</div>
<div class="td" style="left:73px;top:491px;letter-spacing:-0.35px">EGL.LS</div>
<div class="td" style="left:224px;top:491px;letter-spacing:-0.35px">EGL.LS</div>
<div class="td" style="left:294px;top:491px;letter-spacing:0">Daily</div>
<div class="td" style="left:374px;top:491px;letter-spacing:0">25-10-2010 - 1...</div>
<div class="td r" style="left:469px;width:95px;top:491px">$291.21</div>
<div class="td r" style="left:570px;width:95px;top:491px">2.91 %</div>
<div class="td r" style="left:671px;width:54px;top:491px">50</div>
<div class="td r" style="left:731px;width:116px;top:491px">27/23</div>
<div class="td r" style="left:853px;width:64px;top:491px">0.84</div>
<div class="td" style="left:929px;top:491px;letter-spacing:-0.25px">Completed.</div>
<div class="ic" style="top:508px"><i></i></div>
<div class="td" style="left:40px;top:508px">10</div>
<div class="td" style="left:73px;top:508px;letter-spacing:-0.35px">GAL.LS</div>
<div class="td" style="left:224px;top:508px;letter-spacing:-0.35px">GAL.LS</div>
<div class="td" style="left:294px;top:508px;letter-spacing:0">Daily</div>
<div class="td" style="left:374px;top:508px;letter-spacing:0">25-10-2010 - 1...</div>
<div class="td r" style="left:469px;width:95px;top:508px">$421.28</div>
<div class="td r" style="left:570px;width:95px;top:508px">4.21 %</div>
<div class="td r" style="left:671px;width:54px;top:508px">50</div>
<div class="td r" style="left:731px;width:116px;top:508px">22/28</div>
<div class="td r" style="left:853px;width:64px;top:508px">1.72</div>
<div class="td" style="left:929px;top:508px;letter-spacing:-0.25px">Completed.</div>
<div class="ic" style="top:525px"><i></i></div>
<div class="td" style="left:40px;top:525px">11</div>
<div class="td" style="left:73px;top:525px;letter-spacing:-0.35px">INA.LS</div>
<div class="td" style="left:224px;top:525px;letter-spacing:-0.35px">INA.LS</div>
<div class="td" style="left:294px;top:525px;letter-spacing:0">Daily</div>
<div class="td" style="left:374px;top:525px;letter-spacing:0">25-10-2010 - 1...</div>
<div class="td r" style="left:469px;width:95px;top:525px">$292.45</div>
<div class="td r" style="left:570px;width:95px;top:525px">2.92 %</div>
<div class="td r" style="left:671px;width:54px;top:525px">50</div>
<div class="td r" style="left:731px;width:116px;top:525px">10/40</div>
<div class="td r" style="left:853px;width:64px;top:525px">3.97</div>
<div class="td" style="left:929px;top:525px;letter-spacing:-0.25px">Completed.</div>
<div class="ic" style="top:542px"><i></i></div>
<div class="td" style="left:40px;top:542px">12</div>
<div class="td" style="left:73px;top:542px;letter-spacing:-0.35px">JMT.LS</div>
<div class="td" style="left:224px;top:542px;letter-spacing:-0.35px">JMT.LS</div>
<div class="td" style="left:294px;top:542px;letter-spacing:0">Daily</div>
<div class="td" style="left:374px;top:542px;letter-spacing:0">25-10-2010 - 1...</div>
<div class="td r" style="left:469px;width:95px;top:542px">$279.55</div>
<div class="td r" style="left:570px;width:95px;top:542px">2.80 %</div>
<div class="td r" style="left:671px;width:54px;top:542px">50</div>
<div class="td r" style="left:731px;width:116px;top:542px">20/30</div>
<div class="td r" style="left:853px;width:64px;top:542px">1.47</div>
<div class="td" style="left:929px;top:542px;letter-spacing:-0.25px">Completed.</div>
<div class="ic" style="top:559px"><i></i></div>
<div class="td" style="left:40px;top:559px">13</div>
<div class="td" style="left:73px;top:559px;letter-spacing:-0.35px">MBC.LS</div>
<div class="td" style="left:224px;top:559px;letter-spacing:-0.35px">MBC.LS</div>
<div class="td" style="left:294px;top:559px;letter-spacing:0">Daily</div>
<div class="td" style="left:374px;top:559px;letter-spacing:0">25-10-2010 - 1...</div>
<div class="td r" style="left:469px;width:95px;top:559px">$284.16</div>
<div class="td r" style="left:570px;width:95px;top:559px">2.84 %</div>
<div class="td r" style="left:671px;width:54px;top:559px">50</div>
<div class="td r" style="left:731px;width:116px;top:559px">12/38</div>
<div class="td r" style="left:853px;width:64px;top:559px">2.25</div>
<div class="td" style="left:929px;top:559px;letter-spacing:-0.25px">Completed.</div>
<div class="ic" style="top:576px"><i></i></div>
<div class="td" style="left:40px;top:576px">14</div>
<div class="td" style="left:73px;top:576px;letter-spacing:-0.35px">PTC.LS</div>
<div class="td" style="left:224px;top:576px;letter-spacing:-0.35px">PTC.LS</div>
<div class="td" style="left:294px;top:576px;letter-spacing:0">Daily</div>
<div class="td" style="left:374px;top:576px;letter-spacing:0">25-10-2010 - 1...</div>
<div class="td r" style="left:469px;width:95px;top:576px">$177.80</div>
<div class="td r" style="left:570px;width:95px;top:576px">1.78 %</div>
<div class="td r" style="left:671px;width:54px;top:576px">50</div>
<div class="td r" style="left:731px;width:116px;top:576px">21/29</div>
<div class="td r" style="left:853px;width:64px;top:576px">0.78</div>
<div class="td" style="left:929px;top:576px;letter-spacing:-0.25px">Completed.</div>
<div class="ic" style="top:593px"><i></i></div>
<div class="td" style="left:40px;top:593px">15</div>
<div class="td" style="left:73px;top:593px;letter-spacing:-0.35px">PTI.LS</div>
<div class="td" style="left:224px;top:593px;letter-spacing:-0.35px">PTI.LS</div>
<div class="td" style="left:294px;top:593px;letter-spacing:0">Daily</div>
<div class="td" style="left:374px;top:593px;letter-spacing:0">25-10-2010 - 1...</div>
<div class="td r" style="left:469px;width:95px;top:593px">$274.91</div>
<div class="td r" style="left:570px;width:95px;top:593px">2.75 %</div>
<div class="td r" style="left:671px;width:54px;top:593px">50</div>
<div class="td r" style="left:731px;width:116px;top:593px">24/26</div>
<div class="td r" style="left:853px;width:64px;top:593px">0.87</div>
<div class="td" style="left:929px;top:593px;letter-spacing:-0.25px">Completed.</div>
</div>
<div class="th" style="left:1025px;width:6px;border-right:none"></div>
<div class="sb" style="left:1031px;top:330px;width:16px;height:270px"></div>
<div class="arr" style="left:1036px;top:337px;border-bottom:4px solid #505050"></div>
<div class="a" style="left:1031px;top:348px;width:15px;height:171px;border:1px solid #9a9a9a;border-radius:2px;background:linear-gradient(90deg,#f2f2f2,#f8f8f8 40%,#d8d8d8)"></div>
<div class="a" style="left:1035px;top:430px;width:7px;height:6px;border-top:1px solid #777;border-bottom:1px solid #777"><div class="a" style="left:0;top:1px;width:7px;height:1px;background:#777"></div></div>
<div class="arr" style="left:1036px;top:590px;border-top:4px solid #505050"></div>

<!-- bottom -->
<div class="a" style="left:15px;top:608px;width:1034px;height:2px;border-top:1px solid #9a9f8c;border-bottom:1px solid #fafcf0"></div>
<div class="btn" style="left:676px;color:#000">&lt; <u>B</u>ack</div>
<div class="btn" style="left:774px"><u>V</u>iew</div>
<div class="btn" style="left:870px">P<u>l</u>ot on Chart</div>
<div class="btn" style="left:964px">D<u>i</u>scard</div>
<svg class="a" style="left:1040px;top:634px" width="15" height="15" viewBox="0 0 15 15" shape-rendering="crispEdges">
<path d="M1,14 L15,0 V14 Z" fill="#eeeeee" shape-rendering="auto"/>
<g fill="#909090"><rect x="12" y="5" width="1" height="2"/><rect x="9" y="8" width="1" height="2"/><rect x="12" y="8" width="1" height="2"/><rect x="6" y="11" width="1" height="2"/><rect x="9" y="11" width="1" height="2"/><rect x="12" y="11" width="1" height="2"/></g>
<g fill="#ffffff"><rect x="11" y="4" width="1" height="1"/><rect x="8" y="7" width="1" height="1"/><rect x="11" y="7" width="1" height="1"/><rect x="5" y="10" width="1" height="1"/><rect x="8" y="10" width="1" height="1"/><rect x="11" y="10" width="1" height="1"/></g>
</svg>
</body></html>
